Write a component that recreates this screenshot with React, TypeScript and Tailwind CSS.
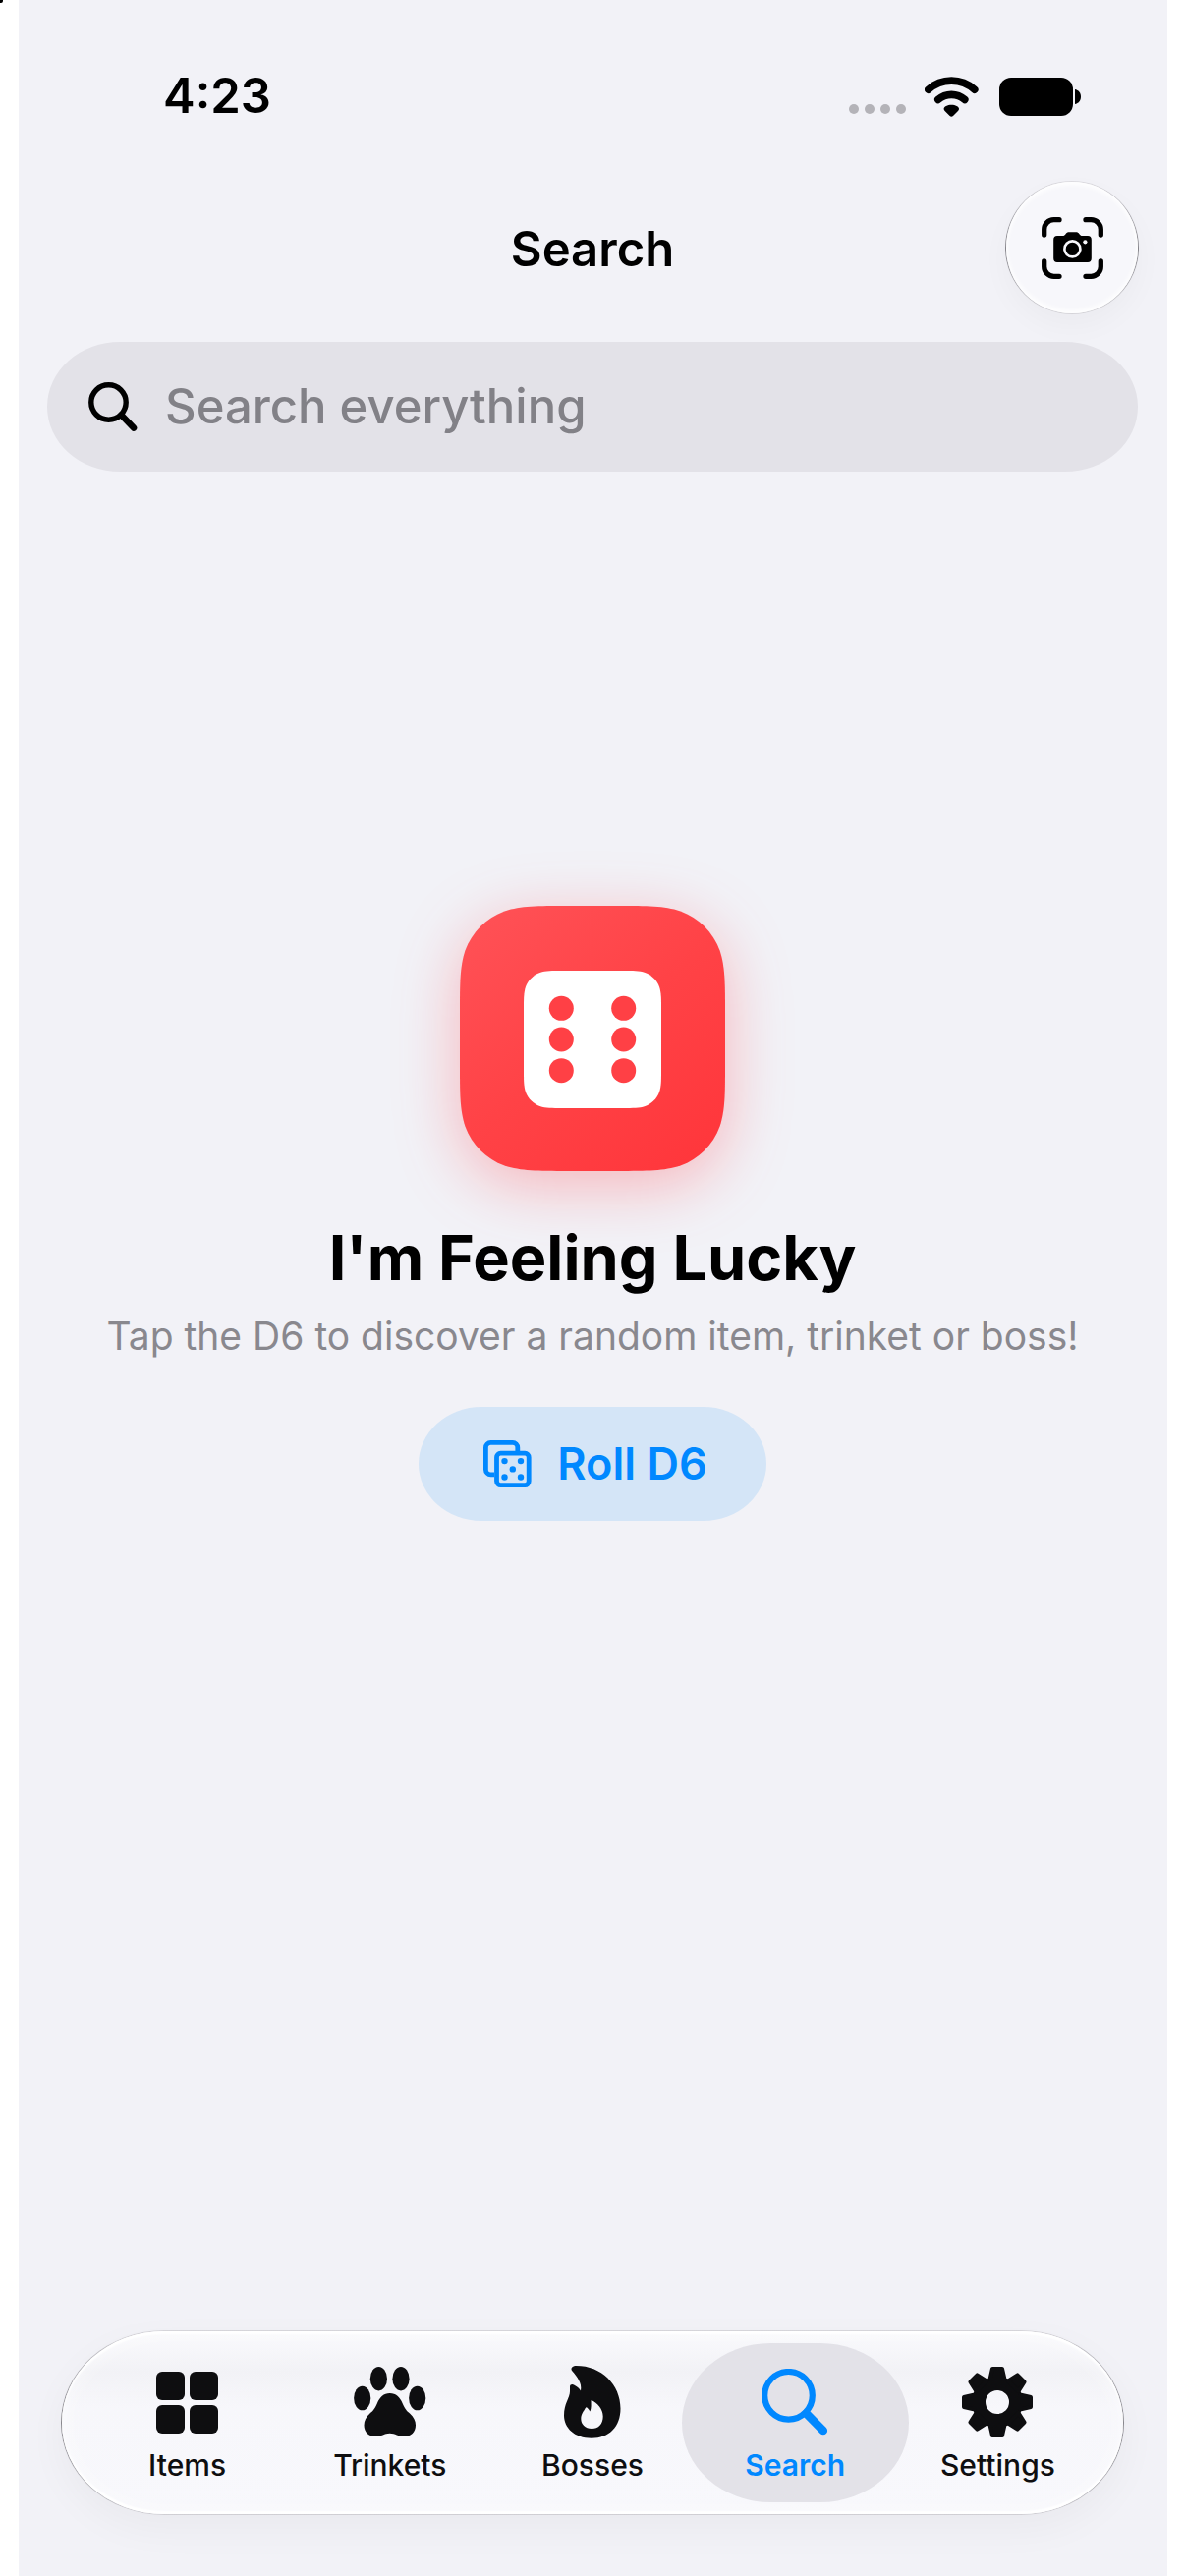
import type { ReactNode } from "react";

// Outline of a square with continuous (iOS style) corners
const squircle = (x: number, y: number, s: number, r: number) => {
  const a = r * 1.5287;
  const b = r * 1.0885;
  const c = r * 0.8684;
  const d = r * 0.6315;
  const e = r * 0.0749;
  const f = r * 0.3728;
  const g = r * 0.1691;
  const X = x + s;
  const Y = y + s;

  return [
    `M${x + a} ${y}H${X - a}`,
    `C${X - b} ${y} ${X - c} ${y} ${X - d} ${y + e}`,
    `C${X - f} ${y + g} ${X - g} ${y + f} ${X - e} ${y + d}`,
    `C${X} ${y + c} ${X} ${y + b} ${X} ${y + a}V${Y - a}`,
    `C${X} ${Y - b} ${X} ${Y - c} ${X - e} ${Y - d}`,
    `C${X - g} ${Y - f} ${X - f} ${Y - g} ${X - d} ${Y - e}`,
    `C${X - c} ${Y} ${X - b} ${Y} ${X - a} ${Y}H${x + a}`,
    `C${x + b} ${Y} ${x + c} ${Y} ${x + d} ${Y - e}`,
    `C${x + f} ${Y - g} ${x + g} ${Y - f} ${x + e} ${Y - d}`,
    `C${x} ${Y - c} ${x} ${Y - b} ${x} ${Y - a}V${y + a}`,
    `C${x} ${y + b} ${x} ${y + c} ${x + e} ${y + d}`,
    `C${x + g} ${y + f} ${x + f} ${y + g} ${x + d} ${y + e}`,
    `C${x + c} ${y} ${x + b} ${y} ${x + a} ${y}Z`
  ].join("");
};

const SignalDots = () => (
  <svg width="58" height="10" viewBox="0 0 58 10" fill="#b4b3b8" aria-hidden="true">
    <circle cx="5" cy="5" r="5" />
    <circle cx="21" cy="5" r="5" />
    <circle cx="37" cy="5" r="5" />
    <circle cx="53" cy="5" r="5" />
  </svg>
);

const WifiIcon = () => (
  <svg width="55" height="41" viewBox="0 0 55 41" fill="none" aria-hidden="true">
    <g stroke="black" strokeWidth="7.6" strokeLinecap="round">
      <path d="M3.8 13.2A35 35 0 0 1 50.8 13.2" />
      <path d="M13.8 23.4A20.5 20.5 0 0 1 40.8 23.4" />
    </g>
    <path
      fill="black"
      d="M27.3 28.7c4 0 7.7 1.8 7.7 4 0 1.5-1 2.3-2 3.3l-4 4c-1 1-2.4 1-3.4 0l-4-4c-1-1-2-1.8-2-3.3 0-2.2 3.7-4 7.7-4z"
    />
  </svg>
);

const BatteryIcon = () => (
  <svg width="83" height="39" viewBox="0 0 83 39" aria-hidden="true">
    <rect width="75" height="39" rx="12" />
    <path d="M77 12c3.5 .6 6 3.6 6 7.5s-2.5 6.900-6 7.5z" />
  </svg>
);

const CameraScanIcon = () => (
  <svg width="63" height="63" viewBox="0 0 63 63" aria-hidden="true">
    <g fill="none" stroke="black" strokeWidth="5.3" strokeLinecap="round">
      <path d="M2.7 18v-5.5a9.8 9.8 0 0 1 9.8-9.8H18" />
      <path d="M45 2.7h5.5a9.8 9.8 0 0 1 9.8 9.8V18" />
      <path d="M60.3 45v5.5a9.8 9.8 0 0 1-9.8 9.8H45" />
      <path d="M18 60.3h-5.5a9.8 9.8 0 0 1-9.8-9.8V45" />
    </g>
    <path d="M16 19h5.5c1.500 0 2.200-.8 3-1.800 1-1.300 2-1.900 3.500-1.900h7c1.500 0 2.500.6 3.500 1.900.8 1 1.500 1.800 3 1.800H47c2.500 0 3.800 1.500 3.800 4v19c0 2.500-1.300 4-3.800 4H16c-2.500 0-3.800-1.500-3.800-4V23c0-2.500 1.300-4 3.800-4z" />
    <circle cx="31.4" cy="32.4" r="8" fill="none" stroke="#f7f7fb" strokeWidth="2.6" />
    <circle cx="44.4" cy="25.3" r="2.1" fill="#f7f7fb" />
  </svg>
);

const FieldSearchIcon = () => (
  <svg width="50" height="50" viewBox="0 0 50 50" fill="none" stroke="black" aria-hidden="true">
    <circle cx="20.5" cy="20.5" r="17.7" strokeWidth="5.4" />
    <path d="M33.5 33.5L46 46.5" strokeWidth="6.6" strokeLinecap="round" />
  </svg>
);

const D6Tile = () => (
  <svg
    className="block drop-shadow-[0_15px_32px_rgba(255,59,66,0.33)]"
    width="270"
    height="270"
    viewBox="0 0 270 270"
    aria-hidden="true"
  >
    <defs>
      <linearGradient id="tile" x1="0.1" y1="0" x2="0.9" y2="1">
        <stop offset="0" stopColor="#ff5156" />
        <stop offset="0.5" stopColor="#ff4246" />
        <stop offset="1" stopColor="#ff363b" />
      </linearGradient>
    </defs>
    <path d={squircle(0, 0, 270, 72)} fill="url(#tile)" />
    <path d={squircle(65, 66, 140, 26)} fill="white" />
    <g fill="#ff4045">
      {[104.3, 136, 167.7].map((y) => (
        <g key={y}>
          <circle cx="103.3" cy={y} r="12.5" />
          <circle cx="166.7" cy={y} r="12.5" />
        </g>
      ))}
    </g>
  </svg>
);

const DiceIcon = () => (
  <svg width="49" height="48" viewBox="0 0 49 48" fill="none" aria-hidden="true">
    <g stroke="#0088ff" strokeWidth="4.8">
      <path d="M34.8 11V7.4a5 5 0 0 0-5-5H7.4a5 5 0 0 0-5 5v22.4a5 5 0 0 0 5 5H11" />
      <rect x="13.5" y="13.2" width="32.7" height="32.4" rx="4" />
    </g>
    <g fill="#0088ff">
      <circle cx="21.5" cy="21.1" r="3.2" />
      <circle cx="38" cy="21.1" r="3.2" />
      <circle cx="29.8" cy="29.4" r="3.2" />
      <circle cx="21.5" cy="37.5" r="3.2" />
      <circle cx="38" cy="37.5" r="3.2" />
    </g>
  </svg>
);

const GridIcon = () => (
  <svg width="63" height="63" viewBox="0 0 63 63" fill="currentColor" aria-hidden="true">
    <rect width="29" height="29" rx="6" />
    <rect x="34" width="29" height="29" rx="6" />
    <rect y="34" width="29" height="29" rx="6" />
    <rect x="34" y="34" width="29" height="29" rx="6" />
  </svg>
);

const PawIcon = () => (
  <svg width="74" height="72" viewBox="0 0 74 72" fill="currentColor" aria-hidden="true">
    <ellipse cx="8.7" cy="32" rx="8.6" ry="12.3" />
    <ellipse cx="25.4" cy="12.2" rx="8.6" ry="12.2" />
    <ellipse cx="48" cy="12.2" rx="8.6" ry="12.2" />
    <ellipse cx="64.7" cy="32" rx="8.6" ry="12.3" />
    <path d="M36.7 27C43 27 47 31 49.5 37C52 43 54 45 57 47.5C61 51 63 55 63 59.5C63 66.5 58 71 51.5 71C45 71 42.5 67.7 36.7 67.7C31 67.7 28.5 71 22 71C15.5 71 10.5 66.5 10.5 59.5C10.5 55 12.5 51 16.5 47.5C19.5 45 21.5 43 24 37C26.5 31 30.5 27 36.7 27Z" />
  </svg>
);

const FlameIcon = () => (
  <svg width="58" height="74" viewBox="0 0 58 74" fill="currentColor" aria-hidden="true">
    <path
      fillRule="evenodd"
      d="M12.5 0C38 0 57.5 19 57.5 43.5C57.5 62 46 73.7 28 73.7C10.5 73.7 0 63 0 50.5C0 38 6 33 6 26V21.5C6 19 8.5 18.5 10.5 19.7C13.5 21.3 15.5 23 17 25.5C18.5 17 13 11 8.5 5.5C6 2.5 8.5 0 12.5 0ZM28 35C34 38 39.7 44 39.7 51.5C39.7 59.5 35 64 28.3 64C21.5 64 17.3 59.5 17.3 54C17.3 48.5 20.5 46 21.8 43C22.2 42 23 42 23.6 42.7C25 44 25.5 45 26.5 46.5C28 43 27.5 39 27.5 35.5Z"
    />
  </svg>
);

const TabSearchIcon = () => (
  <svg width="68" height="68" viewBox="0 0 68 68" fill="none" stroke="currentColor" aria-hidden="true">
    <circle cx="27.5" cy="27.3" r="24.3" strokeWidth="6.2" />
    <path d="M45.5 45.5L62.8 63" strokeWidth="8.6" strokeLinecap="round" />
  </svg>
);

const GearIcon = () => (
  <svg width="72" height="72" viewBox="-36 -36 72 72" aria-hidden="true">
    <circle r="18.9" fill="none" stroke="currentColor" strokeWidth="13.8" />
    {[0, 45, 90, 135, 180, 225, 270, 315].map((angle) => (
      <path
        key={angle}
        transform={`rotate(${angle})`}
        d="M-7.5 -23L-5 -34H5L7.5 -23Z"
        fill="currentColor"
        stroke="currentColor"
        strokeWidth="4"
        strokeLinejoin="round"
      />
    ))}
  </svg>
);

const tabs: { label: string; icon: ReactNode; active?: boolean }[] = [
  { label: "Items", icon: <GridIcon /> },
  { label: "Trinkets", icon: <PawIcon /> },
  { label: "Bosses", icon: <FlameIcon /> },
  { label: "Search", icon: <TabSearchIcon />, active: true },
  { label: "Settings", icon: <GearIcon /> }
];

const StatusBar = () => (
  <div className="flex h-[60px] items-center justify-between pl-[147px] pr-[87px]">
    <span className="text-[49px] leading-[60px] font-semibold">4:23</span>
    <div className="flex items-center">
      <div className="mr-[19px] flex h-[41px] items-end pb-[3px]">
        <SignalDots />
      </div>
      <WifiIcon />
      <div className="ml-[21px]">
        <BatteryIcon />
      </div>
    </div>
  </div>
);

const Header = () => (
  <header className="mt-14 flex items-center px-7">
    <div className="w-[136px]" />
    <h1 className="flex-1 pt-1 text-center text-[49px] leading-[60px] font-semibold">Search</h1>
    <div className="size-[136px] rounded-full bg-linear-to-b from-[#dddce1] via-[#85848a] to-[#d6d5da] p-px shadow-[0_12px_30px_rgba(0,0,0,0.03)]">
      <button
        type="button"
        aria-label="Scan with camera"
        className="flex size-full items-center justify-center rounded-full bg-[#f7f7fb] shadow-[inset_0_3px_5px_white,inset_0_-3px_5px_white]"
      >
        <CameraScanIcon />
      </button>
    </div>
  </header>
);

const SearchField = () => (
  <label className="mx-[29px] mt-7 flex h-[132px] items-center gap-7 rounded-[74px/66px] bg-[#e3e2e8] pl-[42px] pr-10">
    <FieldSearchIcon />
    <input
      type="search"
      aria-label="Search everything"
      placeholder="Search everything"
      className="min-w-0 flex-1 bg-transparent text-[49px] leading-[60px] font-medium outline-none placeholder:text-[#828187]"
    />
  </label>
);

const TabBar = () => (
  <nav className="mx-[43px] mb-[62px] rounded-[105px/94px] bg-linear-to-b from-[#d6d5da] via-[#85848a] to-[#d0cfd4] p-px shadow-[0_14px_40px_rgba(0,0,0,0.04)]">
    <div className="flex h-[186px] items-center rounded-[104px/93px] bg-[linear-gradient(#fafafd,#f2f2f6_22%,#f7f7fb_42%,#f8f8fc)] px-3 shadow-[inset_0_3px_2px_white,inset_0_-3px_2px_white,inset_0_0_24px_rgba(255,255,255,0.6)]">
      {tabs.map((tab) => (
        <button
          key={tab.label}
          type="button"
          aria-current={tab.active ? "page" : undefined}
          className={
            tab.active
              ? "-ml-[25px] flex h-[162px] flex-1 flex-col items-center rounded-[90px/81px] bg-[#e3e2e8] pt-5 text-[#0088ff] first:ml-0"
              : "-ml-[25px] flex h-[162px] flex-1 flex-col items-center pt-5 text-[#0e0e10] first:ml-0"
          }
        >
          <span className="flex h-20 items-center justify-center">{tab.icon}</span>
          <span
            className={
              tab.active
                ? "mt-1 text-[30px] leading-10 font-semibold"
                : "mt-1 text-[30px] leading-10 font-medium"
            }
          >
            {tab.label}
          </span>
        </button>
      ))}
    </div>
  </nav>
);

const App = () => {
  return (
    <div className="relative flex min-h-screen bg-white pl-[19px] pr-[18px] font-[Inter,'Liberation_Sans',sans-serif] text-black">
      <div className="absolute top-0 left-0 size-[3px] rounded-br-xs bg-black" />
      <div className="flex min-w-0 flex-1 flex-col bg-[#f2f2f7] pt-[68px] pr-px">
        <StatusBar />
        <Header />
        <SearchField />
        <main className="flex flex-1 flex-col items-center pt-[442px]">
          <button type="button" aria-label="D6">
            <D6Tile />
          </button>
          <h2 className="mt-12 text-[63px] leading-20 font-bold">I'm Feeling Lucky</h2>
          <p className="mt-4 text-[39px] leading-12 text-[#89888e]">
            Tap the D6 to discover a random item, trinket or boss!
          </p>
          <button
            type="button"
            className="mt-12 flex h-[116px] items-center gap-[26px] rounded-[64px/58px] bg-[#d4e5f7] pl-[66px] pr-[60px] text-[45px] leading-[60px] font-semibold text-[#0088ff]"
          >
            <DiceIcon />
            Roll D6
          </button>
        </main>
        <TabBar />
      </div>
    </div>
  );
};

export default App;
